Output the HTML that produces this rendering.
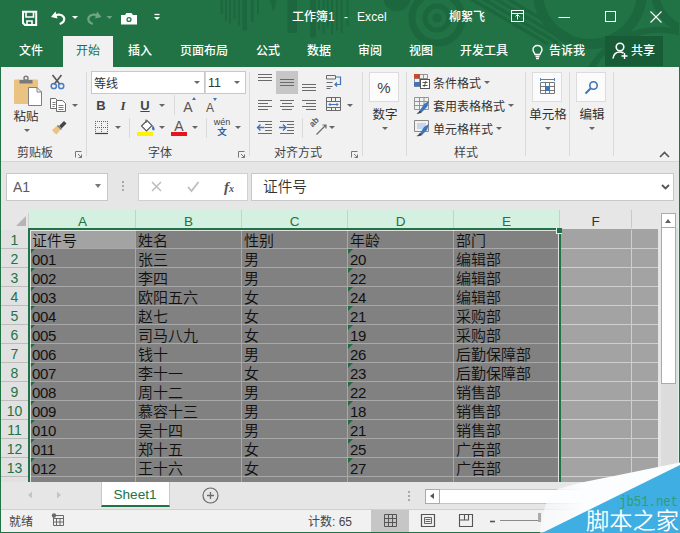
<!DOCTYPE html>
<html lang="zh-CN"><head><meta charset="utf-8"><title>工作簿1 - Excel</title>
<style>
*{box-sizing:border-box;margin:0;padding:0}
html,body{width:680px;height:533px;overflow:hidden;background:#f1f1f1}
body{position:relative;font-family:"Liberation Sans","Noto Sans CJK SC",sans-serif;font-size:12px;color:#444}
.a{position:absolute}
#title{left:0;top:0;width:680px;height:67px;background:#217346;overflow:hidden}
.tt{position:absolute;color:#fff;font-weight:500;font-size:12px;white-space:nowrap;line-height:16px;height:16px}
#ribbon{left:0;top:67px;width:680px;height:95px;background:#f1f1f1;border-left:1px solid #217346;border-right:1px solid #217346;border-bottom:1px solid #d5d5d5}
.l{position:absolute;font-size:12px;color:#444;white-space:nowrap;line-height:16px;height:16px}
.c{transform:translateX(-50%)}
.sep{position:absolute;width:1px;background:#dadada;top:72px;height:84px}
.sep2{position:absolute;width:1px;background:#dadada;height:20px}
.bx{position:absolute;background:#fff;border:1px solid #c8c8c8}
.bb{position:absolute;background:#fbfbfb;border:1px solid #dcdcdc}
.ar{position:absolute;width:0;height:0;border-left:3px solid transparent;border-right:3px solid transparent;border-top:3px solid #666}
#fbar{left:0;top:162px;width:680px;height:48px;background:#e6e6e6;border-left:1px solid #217346;border-right:1px solid #217346}
#grid{left:1px;top:210px;width:678px;height:272px;background:#e6e6e6;overflow:hidden}
svg{position:absolute;overflow:visible}
.ch{position:absolute;top:0;height:18px;line-height:23px;overflow:hidden;text-align:center;font-size:13.5px;color:#217346;background:#d3f0e0;border-right:1px solid #b9d8c8}
.rh{position:absolute;left:0;width:27px;height:19px;line-height:21px;text-align:center;font-size:14px;color:#217346;background:#e1e1e1;border-bottom:1px solid #bdbdbd}
.cell{font-weight:350;position:absolute;height:19px;line-height:22px;font-size:15px;color:#111;white-space:nowrap;padding-left:2px;border-right:1px solid #a8a8a8;border-bottom:1px solid #a8a8a8;background:#818181;overflow:hidden}
.u{background:#a3a3a3;border-right:1px solid #cfcfcf;border-bottom:1px solid #cfcfcf}
.tri{position:absolute;width:0;height:0;border-top:5px solid #1d6b3f;border-right:5px solid transparent}
#tabs{left:0;top:482px;width:680px;height:27px;background:#e6e6e6;border-left:1px solid #217346;border-right:1px solid #217346}
#status{left:0;top:509px;width:680px;height:24px;background:#f1f1f1;border-left:1px solid #217346;border-right:1px solid #217346;border-bottom:1px solid #217346;border-top:1px solid #d0d0d0}
</style></head><body>
<div id="title" class="a">
<svg style="left:0;top:0" width="680" height="66" viewBox="0 0 680 66">
<g fill="#1c673d">
<rect x="220.5" y="0" width="2.5" height="14"/><rect x="225" y="0" width="2" height="21"/><rect x="229" y="0" width="2" height="23.5"/><rect x="233.5" y="0" width="2" height="19"/><rect x="238" y="0" width="2" height="26"/><rect x="242.5" y="0" width="4.5" height="30.5"/><rect x="251" y="0" width="2.5" height="22"/><rect x="257" y="0" width="2" height="14"/><rect x="287.5" y="0" width="9.5" height="33"/><rect x="310" y="0" width="6" height="37.5"/><rect x="318" y="0" width="2" height="30"/><rect x="322.5" y="0" width="2" height="34"/><rect x="326.7" y="0" width="2" height="28"/><rect x="331" y="0" width="2" height="35"/><rect x="336" y="0" width="2" height="31"/><rect x="340.6" y="0" width="2" height="33"/><rect x="346.5" y="0" width="2" height="26"/>
<path d="M270 0h6.500l-3 12z"/>
<path d="M384 0a13 11 0 0 0 26 0z"/>
<circle cx="437" cy="18" r="4.500"/>
</g>
<g fill="none" stroke="#1c673d">
<circle cx="437" cy="18" r="12" stroke-width="5"/>
<circle cx="437" cy="18" r="25" stroke-width="7"/>
<path d="M466 -4L548 44M475 -6L558 43M484 -8L568 42M493 -10L578 41" stroke-width="3.500"/>
<path d="M538 -8A52 52 0 0 0 642 -8" stroke-width="10"/>
<path d="M655 -5A40 40 0 0 0 700 30" stroke-width="8"/>
<path d="M590 70A80 80 0 0 1 690 36" stroke-width="6"/>
</g>
</svg>
<svg style="left:0;top:0" width="680" height="66" viewBox="0 0 680 66" fill="none" stroke="#fff" stroke-width="1.4">
<!-- save -->
<path d="M23 11.800h13.200v13.200h-11.200l-2-2z" stroke-width="2"/><path d="M26 12v5h7.500v-5" stroke-width="1.600"/><path d="M27 25v-4h5v4" stroke-width="1.600"/>
<!-- undo -->
<path d="M55.500 11.500l-4.500 5.500 6.500 1.500z" fill="#fff" stroke="none"/><path d="M53.500 16.300c3.500-2.500 8.500-2.200 10.200 0.800 1.800 3.200-0.700 6-4 6.900" stroke-width="2.300"/>
<path d="M72 16h6l-3 3z" fill="#fff" stroke="none"/>
<!-- redo dim -->
<g opacity="0.35"><path d="M97 11.500l4.500 5.500-6.500 1.500z" fill="#fff" stroke="none"/><path d="M99 16.300c-3.500-2.500-8.500-2.200-10.200 0.800-1.800 3.200 0.700 6 4 6.900" stroke-width="2.300"/><path d="M106.500 16h6l-3 3z" fill="#fff" stroke="none"/></g>
<!-- camera -->
<path d="M121 15h4l1.500-2h5l1.500 2h4v9.500h-16z" fill="#fff" stroke="none"/><circle cx="129" cy="19.500" r="2.600" fill="#217346" stroke="none"/><circle cx="129" cy="19.500" r="1.300" fill="#fff" stroke="none"/>
<!-- qat customize -->
<path d="M154.500 14.500h5" stroke-width="1.300"/><path d="M154 17h6l-3 3z" fill="#fff" stroke="none"/>
<!-- ribbon display -->
<rect x="511.500" y="10.500" width="12" height="11" stroke-width="1"/><path d="M511.500 13.500h12M517.500 19.500v-4.500M515.500 16.500l2-2 2 2" stroke-width="1"/>
<!-- min max close -->
<path d="M558.500 17.500h11.500" stroke-width="1"/><rect x="605.500" y="11.500" width="10" height="10" stroke-width="1"/><path d="M650.500 11.500l11 11M661.500 11.500l-11 11" stroke-width="1.100"/>
<!-- bulb -->
<path d="M537.500 45.500c-2.800 0-4.500 2-4.500 4.300 0 2 1.500 2.800 2 4.700h5c0.500-1.900 2-2.700 2-4.700 0-2.300-1.700-4.300-4.500-4.300zM535.500 56.500h4M536 58.500h3" stroke-width="1.400"/>
<!-- share person -->
</svg>

<div class="tt" style="left:292px;top:9px;">工作簿1</div>
<div class="tt" style="left:344px;top:9px;">-</div>
<div class="tt" style="left:357px;top:9px;letter-spacing:0.1px">Excel</div>
<div class="tt" style="left:449px;top:9px;">柳絮飞</div>
<div class="tt" style="left:19px;top:43px;">文件</div>
<div class="a" style="left:63px;top:36px;width:50px;height:31px;background:#f1f1f1"></div>
<div class="tt" style="left:76px;top:43px;color:#217346;font-weight:400">开始</div>
<div class="tt" style="left:128px;top:43px;">插入</div>
<div class="tt" style="left:180px;top:43px;">页面布局</div>
<div class="tt" style="left:256px;top:43px;">公式</div>
<div class="tt" style="left:307px;top:43px;">数据</div>
<div class="tt" style="left:358px;top:43px;">审阅</div>
<div class="tt" style="left:409px;top:43px;">视图</div>
<div class="tt" style="left:460px;top:43px;">开发工具</div>
<div class="tt" style="left:549px;top:43px;">告诉我</div>
<div class="a" style="left:605px;top:36px;width:58px;height:30px;background:#185c37"></div>
<svg style="left:0;top:0" width="680" height="66" viewBox="0 0 680 66" fill="none" stroke="#fff" stroke-width="1.600">
<circle cx="620" cy="47" r="3.800"/><path d="M613 58.500c0.500-4 3-6.500 7-6.500 1.500 0 2.500 0.300 3.500 1"/><path d="M624.500 53v6M621.500 56h6" stroke-width="1.400"/>
</svg>

<div class="tt" style="left:631px;top:43px;">共享</div>
</div>
<div id="ribbon" class="a"></div>
<div class="sep" style="left:86px"></div><div class="sep" style="left:249px"></div><div class="sep" style="left:362px"></div><div class="sep" style="left:406px"></div><div class="sep" style="left:525px"></div><div class="sep" style="left:569px"></div><div class="sep" style="left:613px"></div>
<div class="l c" style="left:26px;top:109px;font-size:12.5px;color:#333">粘贴</div><div class="ar" style="left:24px;top:129px"></div>
<div class="l c" style="left:35px;top:145px">剪贴板</div>
<div class="bx" style="left:91px;top:71px;width:114px;height:23px"></div><div class="bx" style="left:205px;top:71px;width:41px;height:23px;border-left-color:#d6d6d6"></div>
<div class="l" style="left:94px;top:76px;color:#333">等线</div><div class="l" style="left:208px;top:75px;color:#333;font-size:12.5px">11</div>
<div class="ar" style="left:194px;top:81px"></div><div class="ar" style="left:234px;top:81px"></div>
<div class="l c" style="left:101px;top:98px;font-weight:bold;font-size:13px;color:#444">B</div>
<div class="l c" style="left:123px;top:98px;font-weight:bold;font-style:italic;font-size:13px;color:#444;font-family:'Liberation Serif',serif">I</div>
<div class="l c" style="left:145px;top:98px;font-weight:bold;font-size:13px;color:#444;text-decoration:underline">U</div>
<div class="ar" style="left:159px;top:104px"></div>
<div class="sep2" style="left:174px;top:95px"></div>
<div class="l c" style="left:188px;top:99px;font-size:14px;color:#555">A</div><div class="l c" style="left:210px;top:100px;font-size:12px;color:#555">A</div>
<div class="a" style="left:192px;top:97px;width:0;height:0;border-left:2.500px solid transparent;border-right:2.500px solid transparent;border-bottom:3px solid #3e74b8"></div>
<div class="a" style="left:213px;top:98px;width:0;height:0;border-left:2.500px solid transparent;border-right:2.500px solid transparent;border-top:3px solid #3e74b8"></div>
<div class="ar" style="left:115px;top:126px"></div><div class="sep2" style="left:129px;top:118px"></div>
<div class="ar" style="left:159px;top:126px"></div><div class="ar" style="left:192px;top:126px"></div><div class="sep2" style="left:206px;top:118px"></div><div class="ar" style="left:235px;top:126px"></div>
<div class="l c" style="left:179px;top:118px;font-size:14px;color:#555">A</div><div class="a" style="left:171px;top:132px;width:16px;height:4px;background:#e8131c"></div>
<div class="a" style="left:137px;top:132px;width:16px;height:4px;background:#fff200"></div>
<div class="l c" style="left:222px;top:114px;font-size:9px;color:#444">wén</div><div class="l c" style="left:222px;top:124px;font-size:9.500px;color:#2b5fa8;font-weight:bold">文</div>
<div class="l c" style="left:160px;top:145px">字体</div>
<div class="a" style="left:276px;top:71px;width:22px;height:23px;background:#c6c6c6"></div>
<div class="ar" style="left:347px;top:104px"></div><div class="sep2" style="left:302px;top:118px"></div><div class="ar" style="left:329px;top:126px"></div>
<div class="l c" style="left:298px;top:145px">对齐方式</div>
<div class="bb" style="left:369px;top:72px;width:30px;height:30px"></div><div class="l c" style="left:384px;top:80px;font-size:15px;color:#444">%</div>
<div class="l c" style="left:385px;top:107px;font-size:12.5px;color:#333">数字</div><div class="ar" style="left:382px;top:127px"></div>
<div class="l" style="left:433px;top:76px;color:#333">条件格式</div><div class="ar" style="left:484px;top:81px"></div>
<div class="l" style="left:433px;top:99px;color:#333">套用表格格式</div><div class="ar" style="left:508px;top:104px"></div>
<div class="l" style="left:433px;top:122px;color:#333">单元格样式</div><div class="ar" style="left:496px;top:127px"></div>
<div class="l c" style="left:466px;top:145px">样式</div>
<div class="bb" style="left:532px;top:72px;width:30px;height:30px"></div><div class="l c" style="left:548px;top:107px;font-size:12.5px;color:#333">单元格</div><div class="ar" style="left:545px;top:127px"></div>
<div class="bb" style="left:576px;top:72px;width:30px;height:30px"></div><div class="l c" style="left:592px;top:107px;font-size:12.5px;color:#333">编辑</div><div class="ar" style="left:589px;top:127px"></div>

<svg style="left:0;top:66px" width="680" height="95" viewBox="0 66 680 95" fill="none">
<!-- paste -->
<rect x="14" y="79.500" width="24" height="24.500" rx="1" fill="#eac282"/>
<circle cx="26" cy="78.300" r="2" stroke="#7a7a7a" stroke-width="1.400"/>
<path d="M19.500 83.500v-3.500h13v3.500z" fill="#7a7a7a"/>
<path d="M28.500 87.500h8.500l4.500 4.500v13.500h-13z" fill="#fff" stroke="#7e7e7e"/><path d="M37 87.500v4.500h4.500" stroke="#7e7e7e"/>
<!-- scissors -->
<path d="M52.500 75l7.500 9.500M61.500 75l-7.500 9.500" stroke="#5a5a5a" stroke-width="1.700"/>
<circle cx="53.800" cy="86" r="2.600" stroke="#4a7cc4" stroke-width="1.500"/><circle cx="61.200" cy="86" r="2.600" stroke="#4a7cc4" stroke-width="1.500"/>
<!-- copy -->
<path d="M50.500 98.500h5l2 2v8h-7z" fill="#fff" stroke="#6b6b6b"/><path d="M52.500 102.500h3M52.500 104.500h3M52.500 106.500h2" stroke="#6b6b6b" stroke-width="0.900"/><path d="M56.500 100.500h6l3 3v8h-9z" fill="#fff" stroke="#6b6b6b"/><path d="M58.500 105.500h5M58.500 107.500h5M58.500 109.500h5" stroke="#3e74b8" stroke-width="0.900"/>
<path d="M72 104h6l-3 3z" fill="#666"/>
<!-- format painter -->
<path d="M59 126l5-5 2.500 2.500-5 5z" fill="#444"/><path d="M52 130l6-5 3.500 3.500-5 6-2-1.500z" fill="#eac282"/><path d="M57.500 125.500l4 4" stroke="#777" stroke-width="1.200"/>
<!-- launchers -->
<g stroke="#777" stroke-width="1"><path d="M75.500 157.500v-6h6M78 154l3.500 3.500M81.500 154.500v3h-3"/><path d="M238.500 157.500v-6h6M241 154l3.500 3.500M244.500 154.500v3h-3"/><path d="M351.500 157.500v-6h6M354 154l3.500 3.500M357.500 154.500v3h-3"/></g>
<path d="M660 157l4.500-4.500 4.500 4.500" stroke="#555" stroke-width="1.600"/>
<!-- borders icon -->
<g stroke="#666" stroke-width="1" stroke-dasharray="1 1"><path d="M95 121.500h13M95 127.500h13M95.500 121v13M101.500 121v13M107.500 121v13"/></g><path d="M95 133.500h13" stroke="#444" stroke-width="1.200"/>
<!-- bucket -->
<path d="M141.500 126l5.500-5.500 5 5-5.500 5.500z" fill="#fff" stroke="#555" stroke-width="1.100"/><path d="M146 123v-3.500" stroke="#555"/><path d="M152.500 125c1.500 1.500 2.500 3.500 2 5-1 1-2.500 0-2.500-1.500z" fill="#3e74b8"/>
<!-- align row1 -->
<g stroke="#6a6a6a" stroke-width="1.100">
<path d="M258 74.500h14M258 77.500h14M258 80.500h14"/>
<path d="M280 79.500h14M280 82.500h14M280 85.500h14"/>
<path d="M302 84.500h14M302 87.500h14M302 90.500h14"/>
<path d="M258 100.500h14M258 103.500h10M258 106.500h14M258 109.500h10"/>
<path d="M280 100.500h14M282 103.500h10M280 106.500h14M282 109.500h10"/>
<path d="M302 100.500h14M306 103.500h10M302 106.500h14M306 109.500h10"/>
<path d="M258 121.500h14M265 124.500h7M265 127.500h7M265 130.500h7M258 133.500h14"/>
<path d="M280 121.500h14M287 124.500h7M287 127.500h7M287 130.500h7M280 133.500h14"/>
</g>
<path d="M257.500 127.500h7M260.500 124.500l-3 3 3 3" stroke="#3e74b8" stroke-width="1.400"/>
<path d="M279 127.500h7M283 124.500l3 3-3 3" stroke="#3e74b8" stroke-width="1.400"/>
<!-- wrap text -->
<path d="M326.500 75.500h9v3.500h-9zM326.500 82.500h6M326.500 86.500h6M326.500 88.500h4" stroke="#6a6a6a"/><path d="M336 77h4.500v7.500h-5.500M337 82.500l-2 2 2 2" stroke="#3e74b8" stroke-width="1.200"/>
<!-- merge -->
<path d="M326.500 97.500h14v13h-14zM326.500 101.500h14M326.500 107.500h14M331.500 97.500v4M335.500 97.500v4M331.500 107.500v3M335.500 107.500v3" stroke="#6a6a6a"/><path d="M329 104.500h9M330.500 103l-1.500 1.500 1.500 1.500M336.500 103l1.500 1.500-1.500 1.500" stroke="#3e74b8" stroke-width="1"/>
<!-- orientation -->
<path d="M316.500 134.500l9-9M322.500 125h3.500v3.500" stroke="#6a6a6a" stroke-width="1.200"/>
<text x="0" y="0" transform="translate(312.500 127.500) rotate(-45)" font-family="Liberation Sans,sans-serif" font-size="8.500" font-weight="bold" fill="#5a5a5a" stroke="none">ab</text>
<!-- cond format -->
<path d="M414.500 74.500h13v12h-13zM414.500 78.500h13M414.500 82.500h13M419.500 74.500v12M423.500 74.500v12" stroke="#8a8a8a" stroke-width="0.900"/><rect x="414" y="74" width="6" height="4.500" fill="#c8482c"/><rect x="414" y="82" width="6" height="4.500" fill="#3e74b8"/><rect x="420.500" y="79.500" width="9" height="9" fill="#fff" stroke="#555"/><path d="M422.500 82.500h5M422.500 85.500h5M426 81l-2 6" stroke="#444" stroke-width="0.900"/>
<!-- table format -->
<path d="M414.500 97.500h14v12h-14zM414.500 101.500h14M414.500 105.500h14M419.500 97.500v12M424 97.500v12" stroke="#8a8a8a" stroke-width="0.900"/><path d="M419 112l5-8 5-3-2 6-6 6z" fill="#3e74b8"/><path d="M416.500 113.500c1-0.500 2.500-1.500 3-3l2 1.500c-1 1.500-3 2-5 1.500z" fill="#444"/>
<!-- cell styles -->
<path d="M414.500 120.500h14v11h-14z" stroke="#8a8a8a"/><rect x="417" y="123" width="9" height="6" fill="#c9d6ea"/><path d="M419 135l5-8 5-3-2 6-6 6z" fill="#3e74b8"/><path d="M416.500 136c1-0.500 2.500-1.500 3-3l2 1.500c-1 1.500-3 2-5 1.500z" fill="#444"/>
<!-- cells icon -->
<path d="M540.500 82.500h14v11h-14zM540.500 86.500h14M540.500 90.500h14M545.500 82.500v11M549.500 82.500v11" stroke="#6a6a6a" stroke-width="0.900"/><rect x="545" y="86" width="5" height="5" fill="#3e74b8"/><path d="M541 79.500h13M540.500 78v3M554.500 78v3" stroke="#3e74b8" stroke-width="0.900"/>
<!-- find -->
<circle cx="593.500" cy="85.500" r="3.700" stroke="#3e74b8" stroke-width="1.600"/><path d="M590.500 88.500l-5 5" stroke="#3e74b8" stroke-width="2"/>
</svg>

<div id="fbar" class="a"></div>
<div class="bx" style="left:6px;top:173px;width:102px;height:28px;border-color:#c8c8c8"></div>
<div class="l" style="left:13px;top:179px;font-size:14px;color:#5a5a5a">A1</div>
<div class="ar" style="left:95px;top:184px;border-left-width:3.500px;border-right-width:3.500px;border-top-width:4px;border-top-color:#777"></div>
<div class="a" style="left:122px;top:181px;width:2px;height:2px;background:#a8a8a8;box-shadow:0 4px 0 #a8a8a8,0 8px 0 #a8a8a8"></div>
<div class="bx" style="left:138px;top:173px;width:110px;height:28px;border-color:#d0d0d0"></div>
<div class="bx" style="left:251px;top:173px;width:423px;height:28px;border-color:#c8c8c8"></div>
<div class="l" style="left:263px;top:179px;font-size:14.670px;font-weight:350;color:#333">证件号</div>
<svg style="left:0;top:161px" width="680" height="49" viewBox="0 161 680 49" fill="none">
<path d="M152 182l9 9M161 182l-9 9" stroke="#bdbdbd" stroke-width="1.500"/>
<path d="M188 187l3.500 4 7-9" stroke="#bdbdbd" stroke-width="1.800"/>
<path d="M662 185l3.500 3.500 3.500-3.500" stroke="#555" stroke-width="1.800"/>
</svg>
<div class="l" style="left:224px;top:179px;font-size:15px;font-weight:bold;color:#555;font-family:'Liberation Serif',serif;font-style:italic">f<span style="font-size:10px">x</span></div>

<div id="grid" class="a">
<div class="a" style="left:0;top:0;width:660px;height:19px;background:#e6e6e6"></div>
<svg style="left:15px;top:6px" width="10" height="10" viewBox="0 0 10 10"><path d="M10 0V10H0Z" fill="#b5b5b5"/></svg>
<div class="a" style="left:27px;top:3px;width:1px;height:15px;background:#cfcfcf"></div>
<div class="ch" style="left:29px;width:106px;">A</div>
<div class="ch" style="left:135px;width:106px;">B</div>
<div class="ch" style="left:241px;width:106px;">C</div>
<div class="ch" style="left:347px;width:106px;">D</div>
<div class="ch" style="left:453px;width:106px;">E</div>
<div class="ch" style="left:559px;width:72px;background:#e6e6e6;color:#333;border-right:1px solid #c9c9c9;">F</div>
<div class="rh" style="top:20px">1</div>
<div class="cell" style="left:29px;top:20px;width:106px;background:#a3a3a3;">证件号</div>
<div class="cell" style="left:135px;top:20px;width:106px;">姓名</div>
<div class="cell" style="left:241px;top:20px;width:106px;">性别</div>
<div class="cell" style="left:347px;top:20px;width:106px;">年龄</div>
<div class="cell" style="left:453px;top:20px;width:106px;">部门</div>
<div class="cell u" style="left:559px;top:20px;width:72px"></div>
<div class="cell u" style="left:631px;top:20px;width:27px"></div>
<div class="rh" style="top:39px">2</div>
<div class="cell" style="left:29px;top:39px;width:106px;letter-spacing:-0.4px;"><span class="tri" style="left:0;top:0"></span>001</div>
<div class="cell" style="left:135px;top:39px;width:106px;">张三</div>
<div class="cell" style="left:241px;top:39px;width:106px;">男</div>
<div class="cell" style="left:347px;top:39px;width:106px;letter-spacing:-0.4px;"><span class="tri" style="left:0;top:0"></span>20</div>
<div class="cell" style="left:453px;top:39px;width:106px;">编辑部</div>
<div class="cell u" style="left:559px;top:39px;width:72px"></div>
<div class="cell u" style="left:631px;top:39px;width:27px"></div>
<div class="rh" style="top:58px">3</div>
<div class="cell" style="left:29px;top:58px;width:106px;letter-spacing:-0.4px;"><span class="tri" style="left:0;top:0"></span>002</div>
<div class="cell" style="left:135px;top:58px;width:106px;">李四</div>
<div class="cell" style="left:241px;top:58px;width:106px;">男</div>
<div class="cell" style="left:347px;top:58px;width:106px;letter-spacing:-0.4px;"><span class="tri" style="left:0;top:0"></span>22</div>
<div class="cell" style="left:453px;top:58px;width:106px;">编辑部</div>
<div class="cell u" style="left:559px;top:58px;width:72px"></div>
<div class="cell u" style="left:631px;top:58px;width:27px"></div>
<div class="rh" style="top:77px">4</div>
<div class="cell" style="left:29px;top:77px;width:106px;letter-spacing:-0.4px;"><span class="tri" style="left:0;top:0"></span>003</div>
<div class="cell" style="left:135px;top:77px;width:106px;">欧阳五六</div>
<div class="cell" style="left:241px;top:77px;width:106px;">女</div>
<div class="cell" style="left:347px;top:77px;width:106px;letter-spacing:-0.4px;"><span class="tri" style="left:0;top:0"></span>24</div>
<div class="cell" style="left:453px;top:77px;width:106px;">编辑部</div>
<div class="cell u" style="left:559px;top:77px;width:72px"></div>
<div class="cell u" style="left:631px;top:77px;width:27px"></div>
<div class="rh" style="top:96px">5</div>
<div class="cell" style="left:29px;top:96px;width:106px;letter-spacing:-0.4px;"><span class="tri" style="left:0;top:0"></span>004</div>
<div class="cell" style="left:135px;top:96px;width:106px;">赵七</div>
<div class="cell" style="left:241px;top:96px;width:106px;">女</div>
<div class="cell" style="left:347px;top:96px;width:106px;letter-spacing:-0.4px;"><span class="tri" style="left:0;top:0"></span>21</div>
<div class="cell" style="left:453px;top:96px;width:106px;">采购部</div>
<div class="cell u" style="left:559px;top:96px;width:72px"></div>
<div class="cell u" style="left:631px;top:96px;width:27px"></div>
<div class="rh" style="top:115px">6</div>
<div class="cell" style="left:29px;top:115px;width:106px;letter-spacing:-0.4px;"><span class="tri" style="left:0;top:0"></span>005</div>
<div class="cell" style="left:135px;top:115px;width:106px;">司马八九</div>
<div class="cell" style="left:241px;top:115px;width:106px;">女</div>
<div class="cell" style="left:347px;top:115px;width:106px;letter-spacing:-0.4px;"><span class="tri" style="left:0;top:0"></span>19</div>
<div class="cell" style="left:453px;top:115px;width:106px;">采购部</div>
<div class="cell u" style="left:559px;top:115px;width:72px"></div>
<div class="cell u" style="left:631px;top:115px;width:27px"></div>
<div class="rh" style="top:134px">7</div>
<div class="cell" style="left:29px;top:134px;width:106px;letter-spacing:-0.4px;"><span class="tri" style="left:0;top:0"></span>006</div>
<div class="cell" style="left:135px;top:134px;width:106px;">钱十</div>
<div class="cell" style="left:241px;top:134px;width:106px;">男</div>
<div class="cell" style="left:347px;top:134px;width:106px;letter-spacing:-0.4px;"><span class="tri" style="left:0;top:0"></span>26</div>
<div class="cell" style="left:453px;top:134px;width:106px;">后勤保障部</div>
<div class="cell u" style="left:559px;top:134px;width:72px"></div>
<div class="cell u" style="left:631px;top:134px;width:27px"></div>
<div class="rh" style="top:153px">8</div>
<div class="cell" style="left:29px;top:153px;width:106px;letter-spacing:-0.4px;"><span class="tri" style="left:0;top:0"></span>007</div>
<div class="cell" style="left:135px;top:153px;width:106px;">李十一</div>
<div class="cell" style="left:241px;top:153px;width:106px;">女</div>
<div class="cell" style="left:347px;top:153px;width:106px;letter-spacing:-0.4px;"><span class="tri" style="left:0;top:0"></span>23</div>
<div class="cell" style="left:453px;top:153px;width:106px;">后勤保障部</div>
<div class="cell u" style="left:559px;top:153px;width:72px"></div>
<div class="cell u" style="left:631px;top:153px;width:27px"></div>
<div class="rh" style="top:172px">9</div>
<div class="cell" style="left:29px;top:172px;width:106px;letter-spacing:-0.4px;"><span class="tri" style="left:0;top:0"></span>008</div>
<div class="cell" style="left:135px;top:172px;width:106px;">周十二</div>
<div class="cell" style="left:241px;top:172px;width:106px;">男</div>
<div class="cell" style="left:347px;top:172px;width:106px;letter-spacing:-0.4px;"><span class="tri" style="left:0;top:0"></span>22</div>
<div class="cell" style="left:453px;top:172px;width:106px;">销售部</div>
<div class="cell u" style="left:559px;top:172px;width:72px"></div>
<div class="cell u" style="left:631px;top:172px;width:27px"></div>
<div class="rh" style="top:191px">10</div>
<div class="cell" style="left:29px;top:191px;width:106px;letter-spacing:-0.4px;"><span class="tri" style="left:0;top:0"></span>009</div>
<div class="cell" style="left:135px;top:191px;width:106px;">慕容十三</div>
<div class="cell" style="left:241px;top:191px;width:106px;">男</div>
<div class="cell" style="left:347px;top:191px;width:106px;letter-spacing:-0.4px;"><span class="tri" style="left:0;top:0"></span>18</div>
<div class="cell" style="left:453px;top:191px;width:106px;">销售部</div>
<div class="cell u" style="left:559px;top:191px;width:72px"></div>
<div class="cell u" style="left:631px;top:191px;width:27px"></div>
<div class="rh" style="top:210px">11</div>
<div class="cell" style="left:29px;top:210px;width:106px;letter-spacing:-0.4px;"><span class="tri" style="left:0;top:0"></span>010</div>
<div class="cell" style="left:135px;top:210px;width:106px;">吴十四</div>
<div class="cell" style="left:241px;top:210px;width:106px;">男</div>
<div class="cell" style="left:347px;top:210px;width:106px;letter-spacing:-0.4px;"><span class="tri" style="left:0;top:0"></span>21</div>
<div class="cell" style="left:453px;top:210px;width:106px;">销售部</div>
<div class="cell u" style="left:559px;top:210px;width:72px"></div>
<div class="cell u" style="left:631px;top:210px;width:27px"></div>
<div class="rh" style="top:229px">12</div>
<div class="cell" style="left:29px;top:229px;width:106px;letter-spacing:-0.4px;"><span class="tri" style="left:0;top:0"></span>011</div>
<div class="cell" style="left:135px;top:229px;width:106px;">郑十五</div>
<div class="cell" style="left:241px;top:229px;width:106px;">女</div>
<div class="cell" style="left:347px;top:229px;width:106px;letter-spacing:-0.4px;"><span class="tri" style="left:0;top:0"></span>25</div>
<div class="cell" style="left:453px;top:229px;width:106px;">广告部</div>
<div class="cell u" style="left:559px;top:229px;width:72px"></div>
<div class="cell u" style="left:631px;top:229px;width:27px"></div>
<div class="rh" style="top:248px">13</div>
<div class="cell" style="left:29px;top:248px;width:106px;letter-spacing:-0.4px;"><span class="tri" style="left:0;top:0"></span>012</div>
<div class="cell" style="left:135px;top:248px;width:106px;">王十六</div>
<div class="cell" style="left:241px;top:248px;width:106px;">女</div>
<div class="cell" style="left:347px;top:248px;width:106px;letter-spacing:-0.4px;"><span class="tri" style="left:0;top:0"></span>27</div>
<div class="cell" style="left:453px;top:248px;width:106px;">广告部</div>
<div class="cell u" style="left:559px;top:248px;width:72px"></div>
<div class="cell u" style="left:631px;top:248px;width:27px"></div>
<div class="rh" style="top:267px">14</div>
<div class="cell" style="left:29px;top:267px;width:106px;"></div>
<div class="cell" style="left:135px;top:267px;width:106px;"></div>
<div class="cell" style="left:241px;top:267px;width:106px;"></div>
<div class="cell" style="left:347px;top:267px;width:106px;"></div>
<div class="cell" style="left:453px;top:267px;width:106px;"></div>
<div class="cell u" style="left:559px;top:267px;width:72px"></div>
<div class="cell u" style="left:631px;top:267px;width:27px"></div>
<div class="a" style="left:560px;top:19px;width:98px;height:1px;background:#a3a3a3"></div>
<div class="a" style="left:27px;top:18px;width:533px;height:254px;border:2px solid #217346;border-bottom:none"><div style="width:100%;height:100%;border:1px solid rgba(255,255,255,.75);border-bottom:none"></div></div>
<div class="a" style="left:555px;top:18px;width:6px;height:6px;background:#217346;border-left:1px solid #eee;border-bottom:1px solid #eee"></div>
<div class="a" style="left:657px;top:0;width:22px;height:272px;background:#e6e6e6"></div>
<div class="a" style="left:660px;top:18px;width:17px;height:254px;background:#dcdcdc"></div>
<div class="a" style="left:660px;top:17px;width:15px;height:157px;background:#fff;border:1px solid #ababab"></div>
<div class="a" style="left:677px;top:0;width:1px;height:272px;background:#e4f1ea"></div>
<div class="a" style="left:660px;top:3px;width:15px;height:15px;background:#fff;border:1px solid #ababab"></div>
<div class="a" style="left:664px;top:9px;width:0;height:0;border-left:3.5px solid transparent;border-right:3.5px solid transparent;border-bottom:4px solid #606060"></div>
</div>
<div id="tabs" class="a"></div>
<div id="status" class="a"></div>
<div class="a" style="left:0;top:0;width:680px;height:533px;border:1px solid #217346;border-top:none;pointer-events:none"></div>
<div class="a" style="left:101px;top:482px;width:69px;height:25px;background:#fff;border-bottom:2px solid #217346;border-left:1px solid #c8c8c8;border-right:1px solid #c8c8c8"></div>
<div class="l c" style="left:135px;top:487px;font-size:13.600px;color:#217346">Sheet1</div>
<svg style="left:0;top:482px" width="680" height="51" viewBox="0 482 680 51" fill="none">
<path d="M32 491.500v7l-4-3.500z" fill="#c4c4c4"/><path d="M57 491.500v7l4-3.500z" fill="#c4c4c4"/>
<circle cx="210.500" cy="495.500" r="7.500" stroke="#6a6a6a" stroke-width="1.200"/><path d="M207 495.500h7M210.500 492v7" stroke="#6a6a6a" stroke-width="1.300"/>
<!-- status macro icon -->
<path d="M53.500 515.500h10v10h-10zM53.500 518.500h10M56.500 518.500v7M60 518.500v7M53.500 522h10" stroke="#6a6a6a" stroke-width="1"/><circle cx="54" cy="515.500" r="2.200" fill="#6a6a6a"/>
<!-- view buttons -->
<rect x="371" y="510" width="38" height="22" fill="#c6c6c6"/>
<path d="M384.500 514.500h12v12h-12zM384.500 518.500h12M384.500 522.500h12M388.500 514.500v12M392.500 514.500v12" stroke="#555" stroke-width="1"/>
<path d="M421.500 514.500h13v12h-13z" stroke="#555" stroke-width="1.200"/><path d="M424.500 517.500h7v6h-7zM425.500 519.500h5M425.500 521.500h5" stroke="#555" stroke-width="0.900"/>
<path d="M459.500 514.500h13v12h-13zM464.500 514.500v5.500M459.500 520h9v-5.500" stroke="#555" stroke-width="1.100"/>
<path d="M490 521.500h5" stroke="#555" stroke-width="1.600"/><path d="M500 520.500h40" stroke="#8a8a8a" stroke-width="1"/>
<rect x="538" y="513" width="3" height="9" fill="#aaa"/>
</svg>
<div class="l" style="left:9px;top:514px;color:#444">就绪</div>
<div class="l" style="left:308px;top:514px;color:#444">计数: 65</div>
<div class="a" style="left:408px;top:491px;width:2px;height:2px;background:#a8a8a8;box-shadow:0 4px 0 #a8a8a8,0 8px 0 #a8a8a8"></div>
<div class="a" style="left:425px;top:489px;width:254px;height:15px;background:#fff;border:1px solid #c6c6c6"></div>
<div class="a" style="left:425px;top:489px;width:15px;height:15px;background:#fff;border:1px solid #ababab"></div>
<div class="a" style="left:430px;top:493px;width:0;height:0;border-top:3.500px solid transparent;border-bottom:3.500px solid transparent;border-right:4px solid #555"></div>
<!-- watermark -->
<svg style="left:520px;top:440px" width="160" height="93" viewBox="520 440 160 93">
<defs><linearGradient id="wg" x1="538" y1="0" x2="585" y2="0" gradientUnits="userSpaceOnUse"><stop offset="0" stop-color="#fbfdfe" stop-opacity="0.55"/><stop offset="1" stop-color="#fbfdfe" stop-opacity="1"/></linearGradient></defs><path d="M680 462.500L614 476L579 483L558 489C551 494 547 500 545 507C542 516 541 525 540 533L680 533Z" fill="url(#wg)"/>
<path d="M680 465L542 533L680 533Z" fill="#3eaee3"/>
</svg>
<div class="a" style="left:619px;top:494.500px;font-size:12.300px;line-height:16px;color:#2f9e70;white-space:nowrap;font-family:'Liberation Mono',monospace;transform:scaleY(1.150);transform-origin:0 50%">jb51.net</div>
<div class="a" style="left:586px;top:507px;font-size:23.250px;line-height:28px;color:#fff;white-space:nowrap;font-weight:350;font-family:'Liberation Sans','Noto Sans CJK SC',sans-serif">脚本之家</div>

</body></html>
